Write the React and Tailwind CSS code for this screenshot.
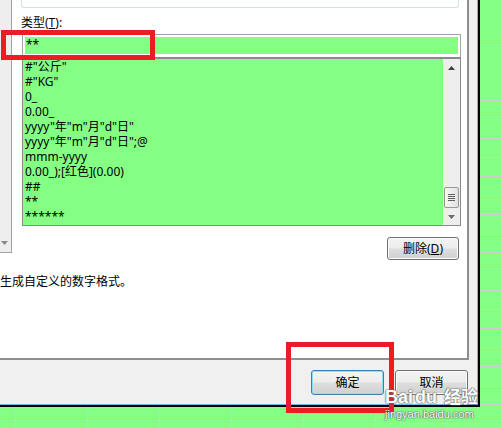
const FONT = "font-['Noto_Sans','Noto_Sans_CJK_SC',sans-serif]";

function SheetRow({ className }) {
  return (
    <div className={"flex shrink-0 " + className}>
      <div className="w-[16px] shrink-0 border-r border-[#cfcfcf]" />
      {[0, 1, 2, 3, 4, 5, 6].map((i) => (
        <div key={i} className="w-[72px] shrink-0 border-r border-[#cfcfcf]" />
      ))}
    </div>
  );
}

function WinButton({ children, focused }) {
  return (
    <div
      className={
        "w-[73px] h-[25px] rounded-[3px] border flex items-center justify-center text-[12px] leading-[15px] text-black " +
        (focused
          ? "border-[#3c7fb1] shadow-[inset_0_0_0_1px_#8fdcf8] "
          : "border-[#707070] shadow-[inset_0_0_0_1px_#fbfbfb] ") +
        "bg-[linear-gradient(to_bottom,#f4f4f4_0%,#ececec_48%,#dedede_52%,#d0d0d0_100%)]"
      }
    >
      {children}
    </div>
  );
}

const lines = [
  '#"公斤"',
  '#"KG"',
  "0_",
  "0.00_",
  'yyyy"年"m"月"d"日"',
  'yyyy"年"m"月"d"日";@',
  "mmm-yyyy",
  "0.00_);[红色](0.00)",
  "##",
  "**",
  "******",
];

export default function App() {
  return (
    <div className={"relative w-[501px] h-[428px] overflow-hidden bg-[#84ff84] " + FONT}>
      {/* spreadsheet behind the dialog */}
      <div className="flex flex-col w-full h-full">
        <SheetRow className="h-[48px] border-b border-[#cfcfcf]" />
        <SheetRow className="h-[53px] border-b border-[#cfcfcf]" />
        {Array.from({ length: 17 }).map((_, i) => (
          <SheetRow key={i} className="h-[19px] border-b border-[#cfcfcf]" />
        ))}
        <SheetRow className="flex-1" />
      </div>

      {/* dialog window */}
      <div className="absolute left-0 top-0 w-[480px] h-[407px] border-r-2 border-b-2 border-black">
        <div className="w-full h-full border-r border-b border-[#74b8e4] bg-[#f0f0f0] flex flex-col">
          <div className="flex h-[360px] shrink-0">
            <div className="w-[469px] h-[360px] bg-white border-r-2 border-b-2 border-[#8e8e8e] flex flex-col">
              <div className="flex">
                {/* left category list remnant */}
                <div className="w-[12px] h-[253px] bg-[#eeeeee] border-r border-b border-[#a3a3a3] flex flex-col justify-end items-start pb-[7px] pl-[1px]">
                  <svg width="7" height="4" viewBox="0 0 7 4">
                    <path d="M0 0 L7 0 L3.5 4 Z" fill="#8a8a8a" />
                  </svg>
                </div>
                {/* right column */}
                <div className="ml-[9px] w-[440px] flex flex-col">
                  <div className="w-[438px] h-[8px] border-x border-b border-[#d5dfe5] rounded-b-[3px]" />
                  <div className="mt-[7px] text-[12px] leading-[15px] text-black">
                    类型(<span className="underline">T</span>):
                  </div>
                  <div className="mt-[4px] ml-[1px] w-[439px] h-[23px] border-t border-x border-[#a5a5a5] pt-[2px] px-[2px] pb-[3px]">
                    <div className="h-[17px] bg-[#84ff84] pl-[1px] text-[12px] leading-[15px] text-black">**</div>
                  </div>
                  <div className="ml-[1px] w-[439px] h-[169px] border border-t-2 border-[#8a8a8a] flex">
                    <div className="flex-1 bg-[#84ff84] pl-[2px] text-[12px] leading-[15px] text-black overflow-hidden">
                      {lines.map((l, i) => (
                        <div key={i} className="whitespace-nowrap">{l}</div>
                      ))}
                    </div>
                    <div className="w-[17px] bg-[#eeeeee] flex flex-col items-center">
                      <div className="h-[17px] w-full flex items-center justify-center">
                        <svg width="7" height="4" viewBox="0 0 7 4">
                          <path d="M0 4 L7 4 L3.5 0 Z" fill="#404040" />
                        </svg>
                      </div>
                      <div className="flex-1" />
                      <div className="w-[15px] h-[21px] rounded-[2px] border border-[#979797] bg-[linear-gradient(to_right,#f6f6f6,#e2e2e2)] flex flex-col items-center justify-center gap-[1px]">
                        <div className="w-[7px] h-[1px] bg-[#606060]" />
                        <div className="w-[7px] h-[1px] bg-[#606060]" />
                        <div className="w-[7px] h-[1px] bg-[#606060]" />
                        <div className="w-[7px] h-[1px] bg-[#606060]" />
                      </div>
                      <div className="h-[17px] w-full flex items-center justify-center">
                        <svg width="7" height="4" viewBox="0 0 7 4">
                          <path d="M0 0 L7 0 L3.5 4 Z" fill="#6a6a6a" />
                        </svg>
                      </div>
                    </div>
                  </div>
                  <div className="mt-[11px] mr-[2px] self-end w-[72px] h-[23px] rounded-[3px] border border-[#707070] shadow-[inset_0_0_0_1px_#fbfbfb] bg-[linear-gradient(to_bottom,#f4f4f4_0%,#ececec_48%,#dedede_52%,#d0d0d0_100%)] flex items-center justify-center text-[12px] leading-[15px] text-black">
                    删除(<span className="underline">D</span>)
                  </div>
                </div>
              </div>
              <div className="mt-[14px] text-[12px] leading-[15px] text-black whitespace-nowrap">
                生成自定义的数字格式。
              </div>
            </div>
          </div>
          <div className="flex justify-end gap-[11px] pt-[10px] pr-[9px]">
            <WinButton focused>确定</WinButton>
            <WinButton>取消</WinButton>
          </div>
        </div>
      </div>

      {/* red annotation boxes */}
      <div className="absolute left-[1px] top-[30px] w-[154px] h-[30px] border-[5px] border-[#ed1c24]" />
      <div className="absolute left-[286px] top-[342px] w-[108px] h-[71px] border-[5px] border-[#ed1c24]" />

      {/* Baidu watermark */}
      <div className="absolute left-[385px] top-[386px] flex flex-col items-start pointer-events-none">
        <div className="flex items-baseline text-white font-bold text-[18px] leading-[20px] [text-shadow:0_0_1px_#555,0_0_1px_#555,0_0_2px_#777]">
          <span className="font-['Liberation_Sans',sans-serif]">Bai</span>
          <span className="font-['Liberation_Sans',sans-serif] ml-[2px]">du</span>
          <span className="ml-[7px] font-['Noto_Sans_CJK_SC',sans-serif] text-[17px]">经验</span>
        </div>
        <div className="mt-[1px] text-white text-[11px] leading-[12px] font-['Liberation_Sans',sans-serif] [text-shadow:0_0_1px_#555,0_0_1px_#555,0_0_2px_#777]">
          jingyan.baidu.com
        </div>
      </div>
    </div>
  );
}
